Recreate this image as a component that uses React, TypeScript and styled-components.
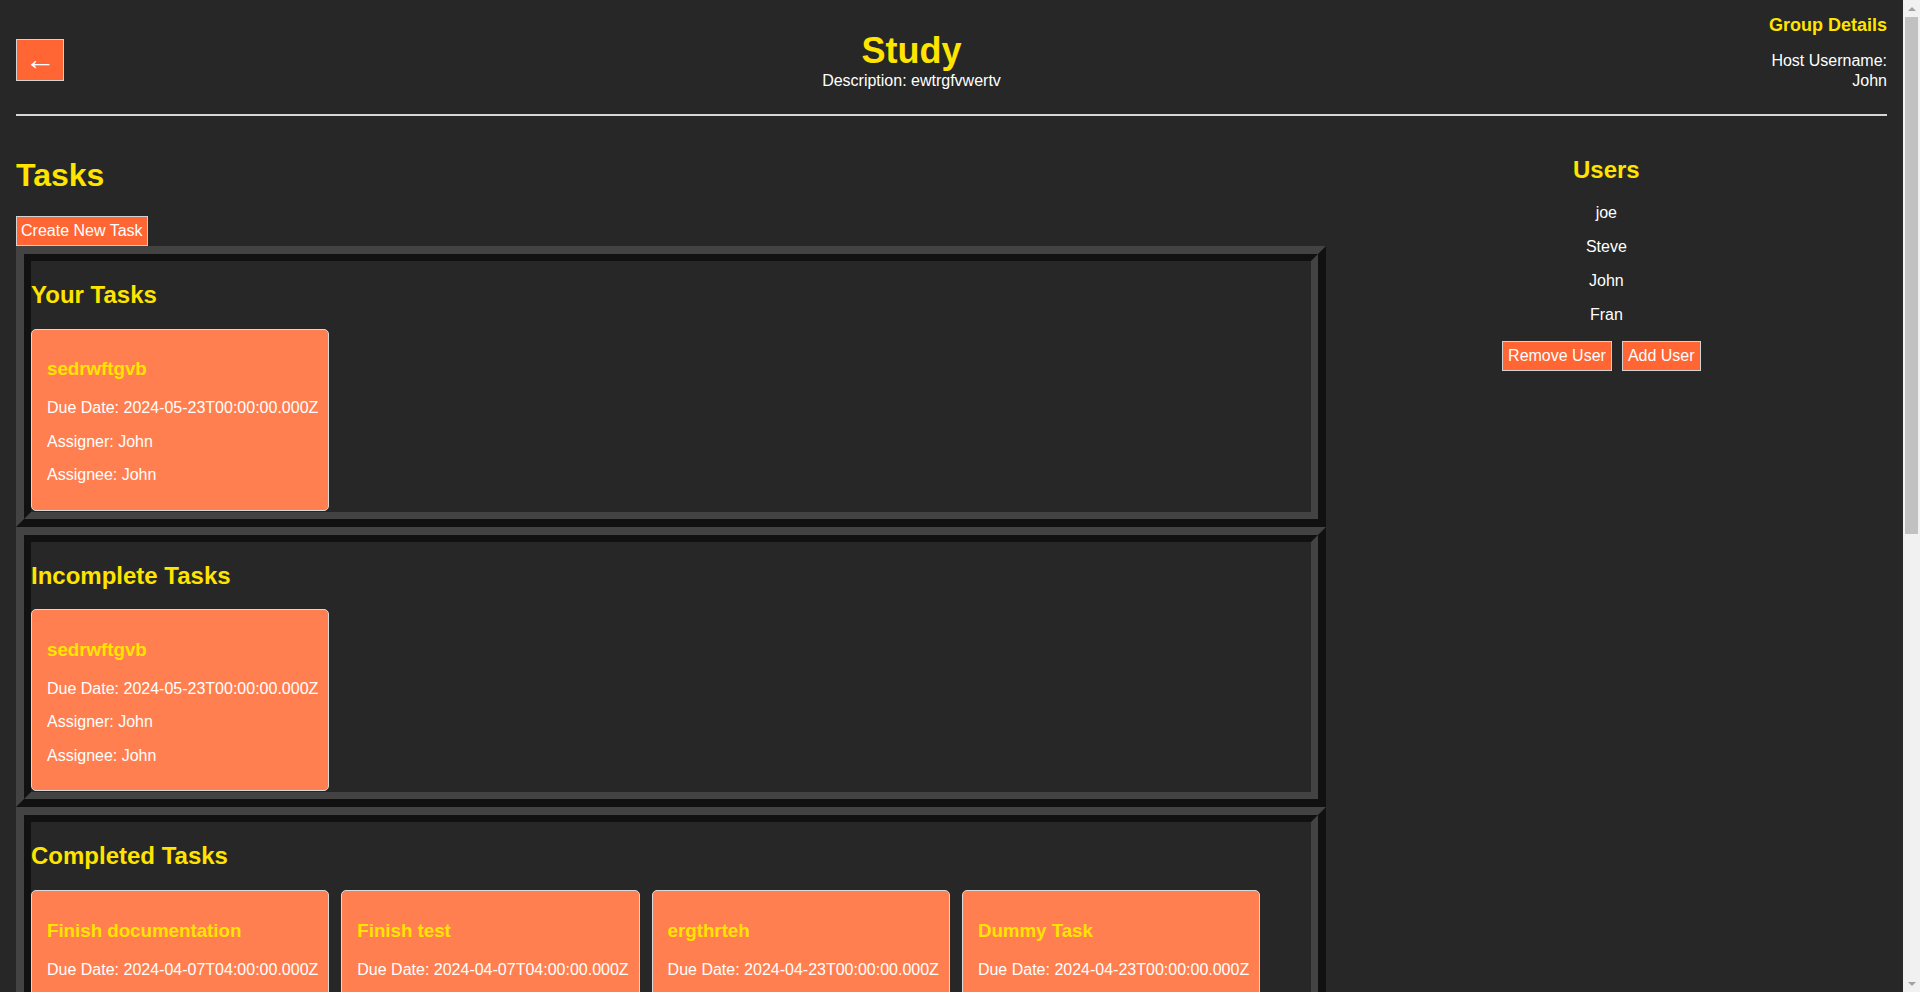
import React from 'react';
import styled, { createGlobalStyle } from 'styled-components';

const YELLOW = '#ffe400';

const GlobalStyle = createGlobalStyle`
  html, body {
    margin: 0;
    padding: 0;
    height: 100%;
    overflow: hidden;
    background: #272727;
  }
  body {
    font-family: "Liberation Sans", Arial, sans-serif;
    font-size: 16px;
    color: #ffffff;
  }
  *, *::before, *::after {
    box-sizing: border-box;
  }
`;

const Shell = styled.div`
  display: flex;
  height: 100vh;
`;

const Viewport = styled.div`
  flex: 1;
  min-width: 0;
  overflow: hidden;
`;

const ScrollBar = styled.div`
  width: 17px;
  flex: none;
  display: flex;
  flex-direction: column;
  background: #f1f1f1;
`;

const ScrollArrow = styled.div<{ $dir: 'up' | 'down' }>`
  height: 17px;
  display: flex;
  align-items: center;
  justify-content: center;
  &::before {
    content: '';
    width: 0;
    height: 0;
    border-left: 4px solid transparent;
    border-right: 4px solid transparent;
    ${(p) =>
      p.$dir === 'up'
        ? 'border-bottom: 4px solid #a3a3a3;'
        : 'border-top: 4px solid #a3a3a3;'}
  }
`;

const ScrollTrack = styled.div`
  flex: 1;
  padding: 0 2px;
`;

const ScrollThumb = styled.div`
  height: 517px;
  background: #c1c1c1;
`;

const Page = styled.div`
  padding: 0 16px;
`;

const Header = styled.header`
  display: flex;
  justify-content: space-between;
  align-items: flex-start;
  min-height: 94px;
`;

const Button = styled.button`
  font-family: "Liberation Sans", Arial, sans-serif;
  font-size: 16px;
  line-height: 18px;
  color: #ffffff;
  background: #ff6633;
  border: 1px solid #d2d2d2;
  border-radius: 0;
  padding: 5px;
  cursor: pointer;
`;

const BackButton = styled(Button)`
  margin-top: 39px;
  width: 48px;
  height: 42px;
  padding: 0 0 0 1px;
  font-size: 31px;
  line-height: 38px;
`;

const TitleBlock = styled.div`
  margin-top: 30px;
  text-align: center;
`;

const Title = styled.h1`
  margin: 0;
  font-size: 36px;
  font-weight: bold;
  color: ${YELLOW};
`;

const Description = styled.p`
  margin: 0;
  font-size: 16px;
`;

const GroupInfo = styled.div`
  padding-left: 10px;
  text-align: right;
`;

const GroupTitle = styled.h3`
  margin: 15px 0;
  font-size: 18px;
  font-weight: bold;
  color: ${YELLOW};
`;

const HostLine = styled.p`
  margin: 0;
  line-height: 20px;
`;

const Divider = styled.hr`
  border: 0;
  height: 2px;
  margin: 20px 0;
  background: #d6d6d6;
`;

const Main = styled.main`
  display: flex;
  align-items: flex-start;
`;

const TasksColumn = styled.section`
  width: 70%;
`;

const UsersColumn = styled.aside`
  width: 30%;
  text-align: center;
`;

const PageTitle = styled.h1`
  margin: 21.44px 0;
  font-size: 32px;
  font-weight: bold;
  color: ${YELLOW};
`;

const CreateButton = styled(Button)`
  display: block;
  padding: 5px 4px;
`;

const Panel = styled.div`
  border: 8px solid;
  border-color: #434343 #111111 #111111 #434343;
`;

const PanelBody = styled.div`
  border: 7px solid;
  border-color: #111111 #434343 #434343 #111111;
  padding-bottom: 1px;
`;

const PanelTitle = styled.h2`
  margin: 19.92px 0;
  font-size: 24px;
  font-weight: bold;
  color: ${YELLOW};
`;

const CardList = styled.div`
  display: flex;
  flex-wrap: wrap;
  align-items: flex-start;
  gap: 12px;
`;

const Card = styled.div`
  background: #ff7f50;
  border: 1px solid #d9d9d9;
  border-radius: 5px;
  padding: 10px 10px 10px 15px;
`;

const CardTitle = styled.h3`
  margin: 18.72px 0;
  font-size: 18.72px;
  font-weight: bold;
  color: ${YELLOW};
`;

const CardLine = styled.p`
  margin: 15.5px 0;
  white-space: nowrap;
`;

const UsersTitle = styled.h2`
  margin: 19.92px 0;
  font-size: 24px;
  font-weight: bold;
  color: ${YELLOW};
`;

const UserName = styled.p`
  margin: 16px 0;
`;

const ButtonRow = styled.div`
  display: flex;
  justify-content: center;
  margin-top: 17px;
`;

const UserButton = styled(Button)`
  margin-right: 10px;
`;

type Task = { name: string; due: string; assigner: string; assignee: string };

const yourTasks: Task[] = [
  { name: 'sedrwftgvb', due: '2024-05-23T00:00:00.000Z', assigner: 'John', assignee: 'John' },
];

const incompleteTasks: Task[] = [
  { name: 'sedrwftgvb', due: '2024-05-23T00:00:00.000Z', assigner: 'John', assignee: 'John' },
];

const completedTasks: Task[] = [
  { name: 'Finish documentation', due: '2024-04-07T04:00:00.000Z', assigner: 'John', assignee: 'John' },
  { name: 'Finish test', due: '2024-04-07T04:00:00.000Z', assigner: 'John', assignee: 'John' },
  { name: 'ergthrteh', due: '2024-04-23T00:00:00.000Z', assigner: 'John', assignee: 'John' },
  { name: 'Dummy Task', due: '2024-04-23T00:00:00.000Z', assigner: 'John', assignee: 'John' },
];

const users = ['joe', 'Steve', 'John', 'Fran'];

function TaskPanel({ title, tasks }: { title: string; tasks: Task[] }) {
  return (
    <Panel>
      <PanelBody>
        <PanelTitle>{title}</PanelTitle>
        <CardList>
          {tasks.map((t, i) => (
            <Card key={i}>
              <CardTitle>{t.name}</CardTitle>
              <CardLine>Due Date: {t.due}</CardLine>
              <CardLine>Assigner: {t.assigner}</CardLine>
              <CardLine>Assignee: {t.assignee}</CardLine>
            </Card>
          ))}
        </CardList>
      </PanelBody>
    </Panel>
  );
}

export default function App() {
  return (
    <>
      <GlobalStyle />
      <Shell>
        <Viewport>
          <Page>
            <Header>
              <BackButton>←</BackButton>
              <TitleBlock>
                <Title>Study</Title>
                <Description>Description: ewtrgfvwertv</Description>
              </TitleBlock>
              <GroupInfo>
                <GroupTitle>Group Details</GroupTitle>
                <HostLine>Host Username:</HostLine>
                <HostLine>John</HostLine>
              </GroupInfo>
            </Header>
            <Divider />
            <Main>
              <TasksColumn>
                <PageTitle>Tasks</PageTitle>
                <CreateButton>Create New Task</CreateButton>
                <TaskPanel title="Your Tasks" tasks={yourTasks} />
                <TaskPanel title="Incomplete Tasks" tasks={incompleteTasks} />
                <TaskPanel title="Completed Tasks" tasks={completedTasks} />
              </TasksColumn>
              <UsersColumn>
                <UsersTitle>Users</UsersTitle>
                {users.map((u) => (
                  <UserName key={u}>{u}</UserName>
                ))}
                <ButtonRow>
                  <UserButton>Remove User</UserButton>
                  <UserButton>Add User</UserButton>
                </ButtonRow>
              </UsersColumn>
            </Main>
          </Page>
        </Viewport>
        <ScrollBar aria-hidden="true">
          <ScrollArrow $dir="up" />
          <ScrollTrack>
            <ScrollThumb />
          </ScrollTrack>
          <ScrollArrow $dir="down" />
        </ScrollBar>
      </Shell>
    </>
  );
}
